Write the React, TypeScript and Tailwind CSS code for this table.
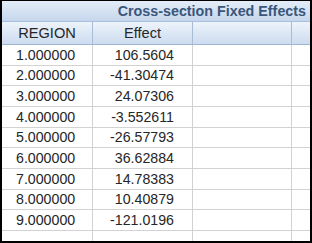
import React from "react";

const rows: [string, string][] = [
  ["1.000000", "106.5604"],
  ["2.000000", "-41.30474"],
  ["3.000000", "24.07306"],
  ["4.000000", "-3.552611"],
  ["5.000000", "-26.57793"],
  ["6.000000", "36.62884"],
  ["7.000000", "14.78383"],
  ["8.000000", "10.40879"],
  ["9.000000", "-121.0196"],
];

const heights = [21, 20, 21, 21, 20, 21, 21, 20, 21];

export default function App() {
  return (
    <div
      className="w-[312px] h-[243px] bg-white border-black border-l-2 border-r-2 border-t border-b-2 flex flex-col overflow-hidden text-[#262626]"
      style={{ fontFamily: '"Liberation Sans", Arial, sans-serif' }}
    >
      <div className="h-[21px] shrink-0 flex items-center justify-end pr-[4px] bg-gradient-to-b from-[#e4edf8] to-[#c6d6ec] border-b border-[#aabfdb]">
        <span className="text-[14.3px] font-bold text-[#3a5679] leading-none">
          Cross-section Fixed Effects
        </span>
      </div>
      <div className="h-[23px] shrink-0 grid grid-cols-[91px_100px_99px_1fr] bg-gradient-to-b from-[#edf3fb] to-[#cddcf0] border-b border-[#9fb5d3] text-[14.6px] leading-none">
        <div className="flex items-center justify-center border-r border-[#a9bcd6]">REGION</div>
        <div className="flex items-center justify-center border-r border-[#a9bcd6]">Effect</div>
        <div className="border-r border-[#a9bcd6]" />
        <div />
      </div>
      {rows.map(([a, b], i) => (
        <div
          key={a}
          className="shrink-0 grid grid-cols-[91px_100px_99px_1fr] border-b border-[#d2d2d2] text-[14.2px] leading-none"
          style={{ height: heights[i] }}
        >
          <div className="flex items-center pl-[14px] border-r border-[#d2d2d2]">{a}</div>
          <div className="flex items-center justify-end pr-[18px] border-r border-[#d2d2d2]">{b}</div>
          <div className="border-r border-[#d2d2d2]" />
          <div />
        </div>
      ))}
      <div className="flex-1 grid grid-cols-[91px_100px_99px_1fr]">
        <div className="border-r border-[#d2d2d2]" />
        <div className="border-r border-[#d2d2d2]" />
        <div className="border-r border-[#d2d2d2]" />
        <div />
      </div>
    </div>
  );
}
